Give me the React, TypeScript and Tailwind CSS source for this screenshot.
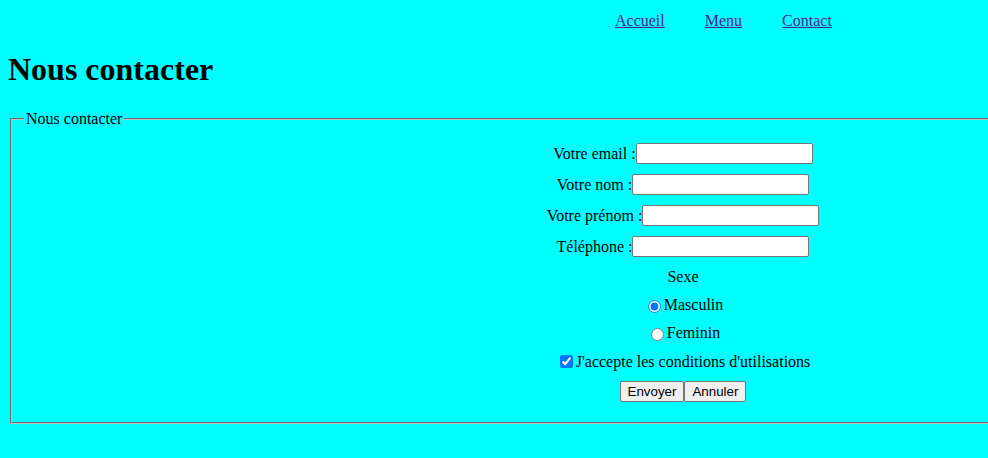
// App.tsx

const serif = { fontFamily: '"Liberation Serif", "Times New Roman", serif' };
const sans = { fontFamily: '"Liberation Sans", Arial, sans-serif' };

function TextRow({ label, id }: { label: string; id: string }) {
  return (
    <div className="flex h-[31px] items-center justify-center">
      <label htmlFor={id} className="leading-[18px]">{label}</label>
      <input
        id={id}
        type="text"
        className="h-[21px] w-[177px] rounded-[2px] border border-[#767676] bg-white px-[2px] py-[1px] text-[13.33px]"
      />
    </div>
  );
}

export default function App() {
  return (
    <div className="min-h-screen w-full overflow-x-hidden bg-[#00ffff] text-black text-[16px]" style={serif}>
      <nav className="flex gap-[40px] pl-[615px] pt-3 leading-[18px]">
        <a href="#" className="text-[#551a8b] underline">Accueil</a>
        <a href="#" className="text-[#551a8b] underline">Menu</a>
        <a href="#" className="text-[#551a8b] underline">Contact</a>
      </nav>

      <h1 className="mx-2 mt-[21px] mb-[22px] text-[32px] font-bold leading-[37px]">Nous contacter</h1>

      <fieldset className="mx-[10px] w-[1346px] border-2 border-[#c0c0c0] px-3 pt-[10px] pb-[15px] [border-style:groove]">
        <legend className="px-[2px] leading-[18px]">Nous contacter</legend>
        <div className="flex flex-col">
          <TextRow label="Votre email :" id="email" />
          <TextRow label="Votre nom :" id="nom" />
          <TextRow label="Votre prénom :" id="prenom" />
          <TextRow label="Téléphone :" id="tel" />

          <div className="mt-[1px] flex h-[28px] items-center justify-center leading-[18px]">Sexe</div>
          <div className="flex h-[28px] items-center justify-center leading-[18px]">
            <input type="radio" name="sexe" id="m" defaultChecked className="mt-[3px] mr-[3px] ml-[5px] h-[13px] w-[13px] accent-[#0075ff]" />
            <label htmlFor="m">Masculin</label>
          </div>
          <div className="flex h-[28px] items-center justify-center leading-[18px]">
            <input type="radio" name="sexe" id="f" className="mt-[3px] mr-[3px] ml-[5px] h-[13px] w-[13px]" />
            <label htmlFor="f">Feminin</label>
          </div>
          <div className="flex h-[29px] items-center justify-center leading-[18px]">
            <input type="checkbox" id="cgu" defaultChecked className="my-[3px] mr-[3px] ml-[4px] h-[13px] w-[13px] accent-[#0075ff]" />
            <label htmlFor="cgu">J'accepte les conditions d'utilisations</label>
          </div>
          <div className="flex h-[31px] items-center justify-center">
            <button
              type="submit"
              className="h-[21px] rounded-[2px] border border-[#767676] bg-[#efefef] px-[7px] text-[13.33px]"
              style={sans}
            >
              Envoyer
            </button>
            <button
              type="reset"
              className="h-[21px] rounded-[2px] border border-[#767676] bg-[#efefef] px-[7px] text-[13.33px]"
              style={sans}
            >
              Annuler
            </button>
          </div>
        </div>
      </fieldset>
    </div>
  );
}
